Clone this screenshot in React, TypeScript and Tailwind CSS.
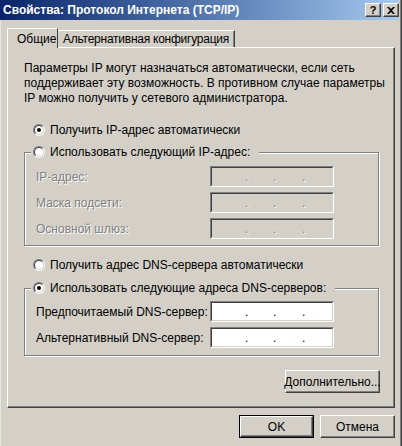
import React from 'react';

const FONT = "font-['Liberation_Sans',Arial,sans-serif]";

const Radio = ({ checked }: { checked?: boolean }) => (
  <span className="inline-flex w-[12px] h-[12px] shrink-0 rounded-full border border-t-[#808080] border-l-[#808080] border-b-white border-r-white">
    <span className="flex w-full h-full items-center justify-center rounded-full bg-white border border-t-[#404040] border-l-[#404040] border-b-[#d4d0c8] border-r-[#d4d0c8]">
      {checked && <span className="w-[4px] h-[4px] rounded-full bg-black" />}
    </span>
  </span>
);

const RadioLabel = ({ checked, label }: { checked?: boolean; label: string }) => (
  <span className="flex h-[14px] items-center gap-[5px] whitespace-nowrap">
    <Radio checked={checked} />
    <span>{label}</span>
  </span>
);

const IpField = ({ disabled }: { disabled?: boolean }) => {
  const dot = disabled
    ? 'text-[#808080] [text-shadow:1px_1px_0_#fff]'
    : 'text-black';
  return (
    <div className="w-[124px] h-[21px] border border-t-[#808080] border-l-[#808080] border-b-white border-r-white">
      <div
        className={`flex h-full items-center pl-[6px] border border-t-[#404040] border-l-[#404040] border-b-[#d4d0c8] border-r-[#d4d0c8] ${
          disabled ? 'bg-[#d4d0c8]' : 'bg-white'
        }`}
      >
        <span className="w-[27px]" />
        <span className={`w-[2px] ${dot}`}>.</span>
        <span className="w-[26px]" />
        <span className={`w-[2px] ${dot}`}>.</span>
        <span className="w-[27px]" />
        <span className={`w-[2px] ${dot}`}>.</span>
      </div>
    </div>
  );
};

const FieldRow = ({ label, disabled }: { label: string; disabled?: boolean }) => (
  <div className="flex h-[21px] items-center ml-[5px]">
    <span
      className={`w-[174px] whitespace-nowrap ${
        disabled ? 'text-[#808080] [text-shadow:1px_1px_0_#fff]' : ''
      }`}
    >
      {label}
    </span>
    <IpField disabled={disabled} />
  </div>
);

const Button = ({
  children,
  isDefault,
  className = '',
}: {
  children: React.ReactNode;
  isDefault?: boolean;
  className?: string;
}) => (
  <button
    className={`h-[23px] p-0 bg-[#d4d0c8] ${isDefault ? 'border border-black' : ''} ${className}`}
  >
    <span className="flex h-full items-center justify-center border border-t-white border-l-white border-b-[#404040] border-r-[#404040] shadow-[inset_-1px_-1px_0_#808080]">
      {children}
    </span>
  </button>
);

const CaptionButton = ({ children }: { children: React.ReactNode }) => (
  <span className="flex w-[16px] h-[14px] items-center justify-center bg-[#d4d0c8] border border-t-white border-l-white border-b-[#404040] border-r-[#404040] shadow-[inset_-1px_-1px_0_#808080]">
    {children}
  </span>
);

const Group = ({
  legend,
  checked,
  className = '',
  children,
}: {
  legend: string;
  checked?: boolean;
  className?: string;
  children: React.ReactNode;
}) => (
  <fieldset
    className={`w-[355px] ml-[16px] pl-[6px] border border-[#808080] shadow-[1px_1px_0_#fff,inset_1px_1px_0_#fff] ${className}`}
  >
    <legend className="pl-[2px] pr-[9px] bg-[#d4d0c8] relative">
      <RadioLabel checked={checked} label={legend} />
    </legend>
    {children}
  </fieldset>
);

export default function App() {
  return (
    <div
      className={`${FONT} text-[12px] text-black w-[402px] h-[446px] overflow-hidden bg-[#d4d0c8] border-r border-r-[#404040] shadow-[inset_-1px_0_0_#808080,inset_1px_0_0_#e8e6e0]`}
    >
      {/* title bar */}
      <div className="flex h-[20px] mr-[2px] items-center justify-between pl-[3px] bg-linear-to-r from-[#0a246a] to-[#a6caf0]">
        <span className="text-white font-bold whitespace-nowrap">
          Свойства: Протокол Интернета (TCP/IP)
        </span>
        <div className="flex gap-[2px]">
          <CaptionButton>
            <span className="font-bold text-[11px] leading-none">?</span>
          </CaptionButton>
          <CaptionButton>
            <svg width="8" height="7" viewBox="0 0 8 7">
              <path d="M0 0h2l2 2 2-2h2L5 3.5 8 7H6L4 5 2 7H0l3-3.5z" fill="black" />
            </svg>
          </CaptionButton>
        </div>
      </div>

      <div className="pl-[7px] pt-[8px]">
        {/* tabs */}
        <div className="flex h-[19px] items-end">
          <div className="relative z-10 flex h-[20px] -mb-[1px] w-[51px] items-center pl-[9px] bg-[#d4d0c8] border-t border-l border-t-white border-l-white border-r border-r-[#404040] rounded-tl-[2px]">
            Общие
          </div>
          <div className="flex h-[17px] items-center px-[5px] whitespace-nowrap tracking-[-0.25px] border-t border-t-white border-r border-r-[#404040] shadow-[inset_-1px_0_0_#808080]">
            Альтернативная конфигурация
          </div>
        </div>

        {/* tab panel */}
        <div className="w-[388px] h-[361px] border border-t-white border-l-white border-b-[#404040] border-r-[#404040] shadow-[inset_-1px_-1px_0_#808080]">
          <p className="mt-[13px] ml-[16px] leading-[15px] whitespace-nowrap">
            Параметры IP могут назначаться автоматически, если сеть
            <br />
            поддерживает эту возможность. В противном случае параметры
            <br />
            IP можно получить у сетевого администратора.
          </p>

          <div className="mt-[17px] ml-[25px]">
            <RadioLabel checked label="Получить IP-адрес автоматически" />
          </div>

          <Group legend="Использовать следующий IP-адрес:" className="mt-[8px] pt-[7px] pb-[6px]">
            <div className="flex flex-col gap-[5px]">
              <FieldRow label="IP-адрес:" disabled />
              <FieldRow label="Маска подсети:" disabled />
              <FieldRow label="Основной шлюз:" disabled />
            </div>
          </Group>

          <div className="mt-[12px] ml-[25px]">
            <RadioLabel label="Получить адрес DNS-сервера автоматически" />
          </div>

          <Group
            legend="Использовать следующие адреса DNS-серверов:"
            checked
            className="mt-[9px] pt-[6px] pb-[7px]"
          >
            <div className="flex flex-col gap-[5px]">
              <FieldRow label="Предпочитаемый DNS-сервер:" />
              <FieldRow label="Альтернативный DNS-сервер:" />
            </div>
          </Group>

          <div className="flex justify-end mt-[14px] mr-[14px]">
            <Button className="w-[95px]">Дополнительно...</Button>
          </div>
        </div>

        {/* dialog buttons */}
        <div className="flex w-[388px] justify-end gap-[6px] mt-[7px]">
          <Button isDefault className="w-[75px]">
            OK
          </Button>
          <Button className="w-[75px]">Отмена</Button>
        </div>
      </div>
    </div>
  );
}
